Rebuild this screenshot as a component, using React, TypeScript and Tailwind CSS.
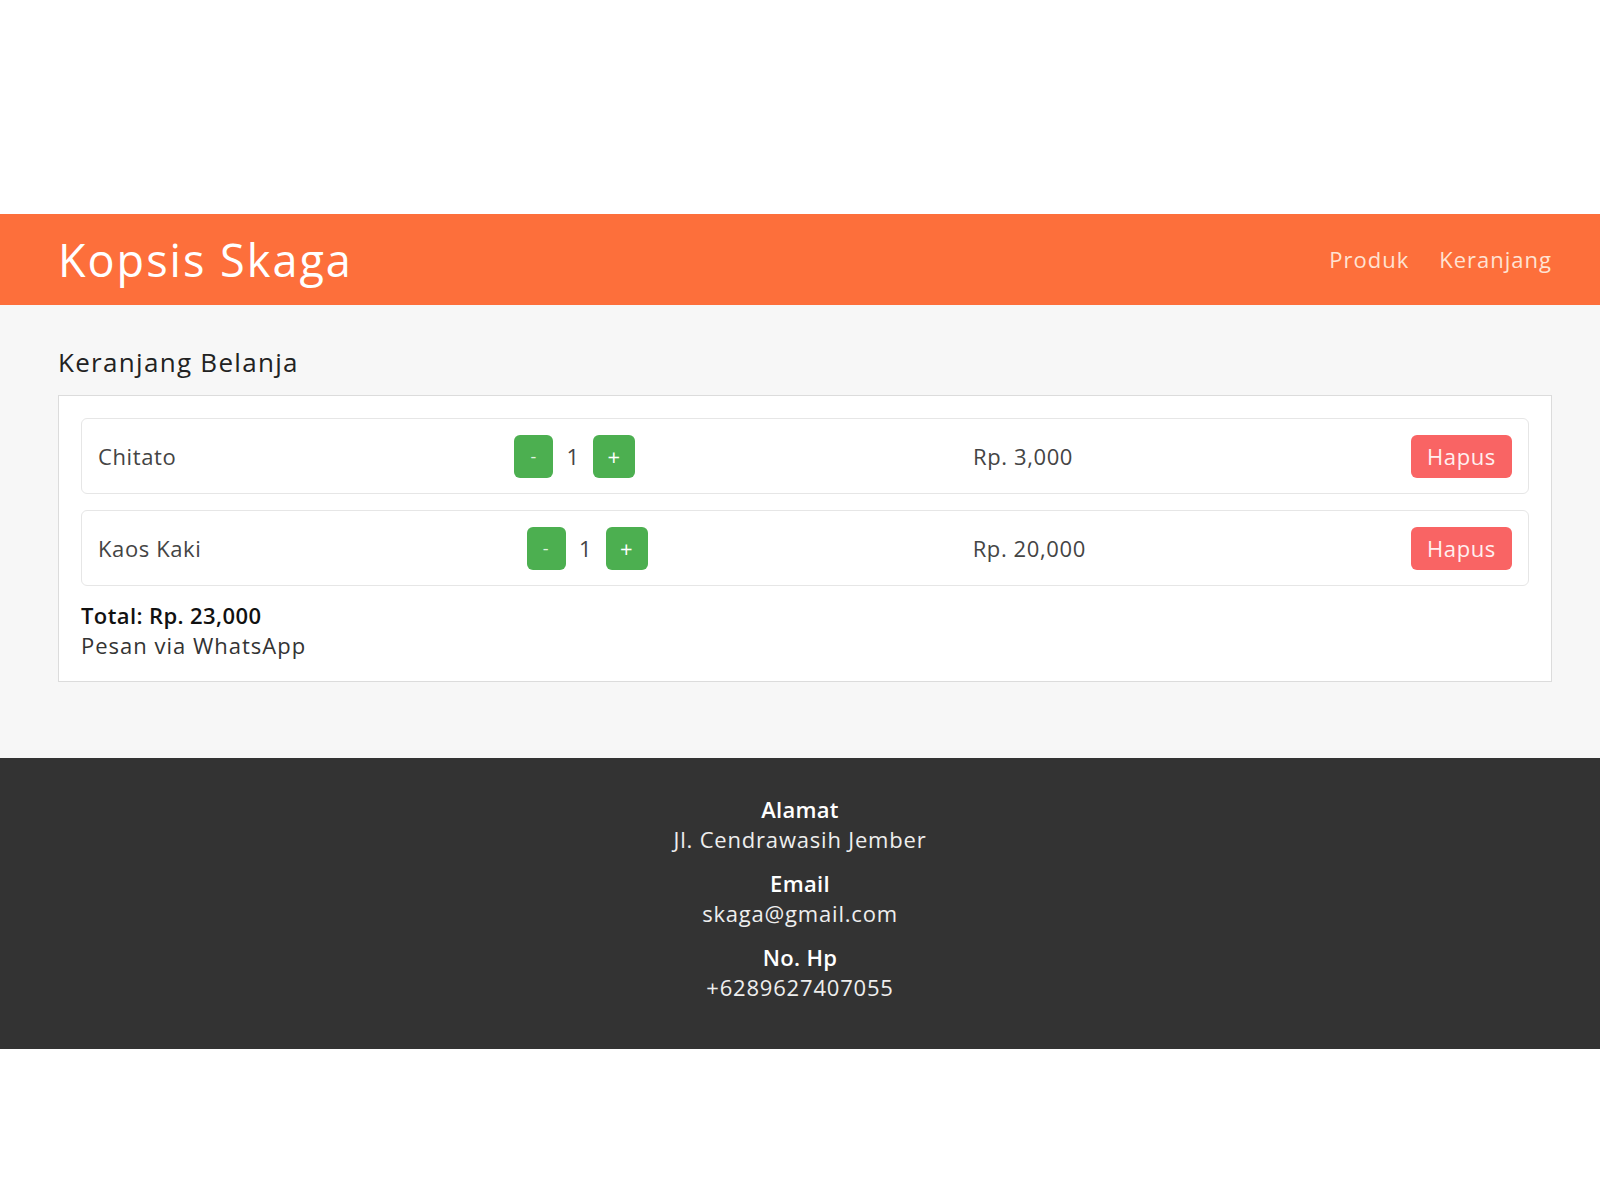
import { useState } from 'react'

type Item = { id: number; name: string; price: number; qty: number }

const rupiah = (n: number) => 'Rp. ' + n.toLocaleString('en-US')

export default function App() {
  const [items, setItems] = useState<Item[]>([
    { id: 1, name: 'Chitato', price: 3000, qty: 1 },
    { id: 2, name: 'Kaos Kaki', price: 20000, qty: 1 },
  ])

  const change = (id: number, d: number) =>
    setItems(items.map((it) => (it.id === id ? { ...it, qty: Math.max(1, it.qty + d) } : it)))

  const total = items.reduce((s, it) => s + it.price * it.qty, 0)

  return (
    <div className="min-h-screen bg-white pt-[214px] font-['Open_Sans',sans-serif]">
      {/* Header */}
      <header className="flex h-[91px] items-center justify-between bg-[#fd6f3b] pr-[48px] pl-[58px]">
        <h1 className="text-[45px] font-normal tracking-[2px] text-white">Kopsis Skaga</h1>
        <nav className="flex items-center gap-[30px] text-[22px] tracking-[1px] text-[#ffe3d3]">
          <a href="#">Produk</a>
          <a href="#">Keranjang</a>
        </nav>
      </header>

      {/* Cart */}
      <main className="bg-[#f7f7f7] pt-[40px] pr-[48px] pb-[76px] pl-[58px]">
        <h2 className="mb-[16px] text-[26px] leading-[34px] tracking-[1.3px] text-[#222]">Keranjang Belanja</h2>
        <div className="border border-[#dcdcdc] bg-white px-[22px] pt-[22px] pb-[21px]">
          <div className="flex flex-col gap-[16px]">
            {items.map((it) => (
              <div
                key={it.id}
                className="flex h-[76px] items-center justify-between rounded-[6px] border border-[#e6e6e6] px-[16px] text-[22px] tracking-[0.6px] text-[#444]"
              >
                <span>{it.name}</span>
                <div className="flex items-center gap-[11px]">
                  <button
                    onClick={() => change(it.id, -1)}
                    className="h-[43px] w-[39px] rounded-[6px] bg-[#4caf50] text-[18px] text-[#dff3df]"
                  >
                    -
                  </button>
                  <span className="w-[18px] text-center">{it.qty}</span>
                  <button
                    onClick={() => change(it.id, 1)}
                    className="h-[43px] w-[42px] rounded-[6px] bg-[#4caf50] text-[22px] text-white"
                  >
                    +
                  </button>
                </div>
                <span>{rupiah(it.price * it.qty)}</span>
                <button
                  onClick={() => setItems(items.filter((x) => x.id !== it.id))}
                  className="h-[43px] w-[101px] rounded-[6px] bg-[#f96464] text-[22px] text-[#fff0f0]"
                >
                  Hapus
                </button>
              </div>
            ))}
          </div>
          <p className="mt-[14px] text-[22px] leading-[30px] font-semibold tracking-[0.4px] text-[#111]">
            Total: {rupiah(total)}
          </p>
          <a href="#" className="block text-[22px] leading-[30px] tracking-[1px] text-[#333]">
            Pesan via WhatsApp
          </a>
        </div>
      </main>

      {/* Footer */}
      <footer className="flex h-[291px] flex-col items-center bg-[#333333] pt-[36px] text-center text-[22px] leading-[30px] tracking-[0.8px] text-[#eeeeee]">
        <div className="mb-[14px]">
          <p className="font-semibold tracking-[0.3px] text-white">Alamat</p>
          <p>Jl. Cendrawasih Jember</p>
        </div>
        <div className="mb-[14px]">
          <p className="font-semibold tracking-[0.3px] text-white">Email</p>
          <p>skaga@gmail.com</p>
        </div>
        <div>
          <p className="font-semibold tracking-[0.3px] text-white">No. Hp</p>
          <p>+6289627407055</p>
        </div>
      </footer>
    </div>
  )
}
